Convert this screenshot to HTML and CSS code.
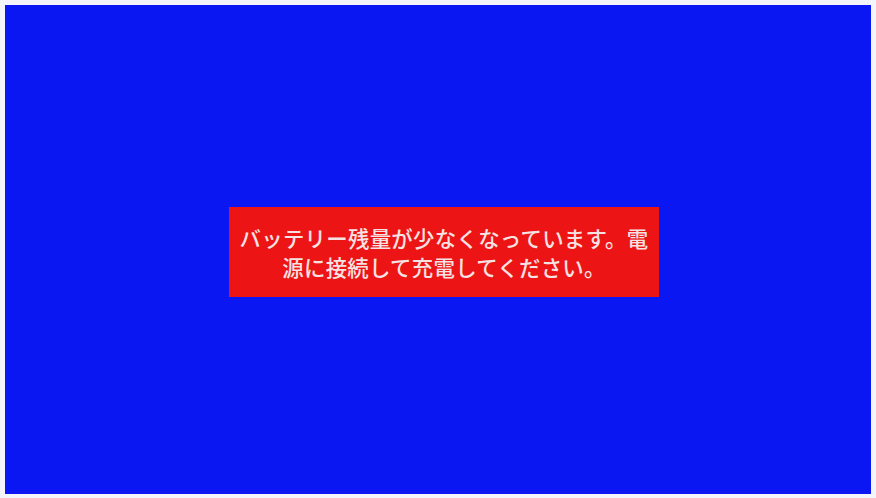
FILE: index.html
```html
<!DOCTYPE html>
<html lang="ja">
<head>
<meta charset="utf-8">
<link rel="stylesheet" href="styles.css">
</head>
<body>
<div class="stage">
  <div class="alert">
    <p class="msg">バッテリー残量が少なくなっています。電<br>源に接続して充電してください。</p>
  </div>
</div>
</body>
</html>
```
FILE: styles.css
```css
html, body {
  margin: 0;
  padding: 0;
  background: #f4f5fa;
  width: 876px;
  height: 498px;
  overflow: hidden;
}
.stage {
  box-sizing: border-box;
  margin: 5px 5px 4px 5px;
  width: 866px;
  height: 489px;
  background: #0a17f3;
  display: flex;
  justify-content: center;
  align-items: center;
  padding: 5px 0 0 12px;
}
.alert {
  box-sizing: border-box;
  width: 430px;
  height: 90px;
  background: #ec1414;
  display: flex;
  justify-content: center;
  align-items: center;
}
.msg {
  margin: 0;
  color: #f6e2e2;
  font-family: "Noto Sans CJK JP", "Noto Sans", sans-serif;
  font-weight: 500;
  font-size: 21.4px;
  letter-spacing: 0.3px;
  line-height: 29px;
  text-align: center;
  white-space: nowrap;
}
```
